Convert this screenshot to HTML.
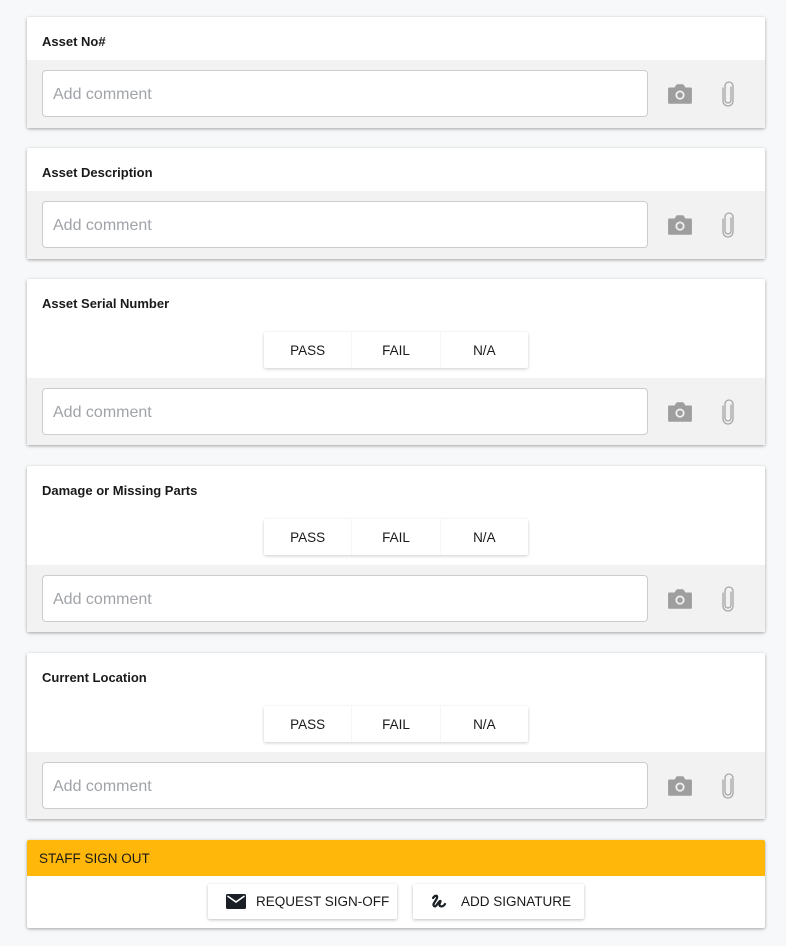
<!DOCTYPE html>
<html><head><meta charset="utf-8"><style>
*{box-sizing:border-box;margin:0;padding:0}
body{width:786px;height:946px;background:#f7f8f9;font-family:"Liberation Sans",sans-serif;position:relative;overflow:hidden}
.card{position:absolute;left:27px;width:738px;background:#fff;border-radius:2px;box-shadow:0 1px 3px rgba(0,0,0,.35)}
.t{position:absolute;left:15px;top:17px;font-size:13px;font-weight:bold;color:#1a1a1a}
.g{position:absolute;left:0;right:0;bottom:0;height:68px;background:#f2f2f2}
.in{position:absolute;left:15px;top:10px;width:606px;height:47px;background:#fff;border:1px solid #ccc;border-radius:4px;font-size:16px;color:#a0a3a8;padding:15px 10px 0}
.cam{position:absolute;left:640px;top:23px}
.clip{position:absolute;left:693px;top:21px}
.seg{position:absolute;left:237px;width:264px;height:36px;display:flex;box-shadow:0 1px 3px rgba(0,0,0,.2);border-radius:2px;background:#fff}
.seg div{flex:1;text-align:center;font-size:13.5px;line-height:37px;color:#1a1a1a;border-left:1px solid #f6f6f6}
.seg div:first-child{border-left:none}
.btn{position:absolute;top:44px;height:35px;background:#fff;box-shadow:0 1px 3px rgba(0,0,0,.25);border-radius:2px;font-size:13.5px;color:#1a1a1a;line-height:35px}
</style></head><body>

<div class="card" style="top:17px;height:111px"><div class="t">Asset No#</div><div class="g"><div class="in">Add comment</div>
<svg class="cam" width="26" height="22" viewBox="0 0 24 20"><path d="M2 4h5l2-3h6l2 3h5a1 1 0 0 1 1 1v13a1 1 0 0 1-1 1H2a1 1 0 0 1-1-1V5a1 1 0 0 1 1-1z" fill="#9e9e9e"/><circle cx="12" cy="11" r="4.2" fill="#f2f2f2"/><circle cx="12" cy="11" r="2.6" fill="#9e9e9e"/></svg>
<svg class="clip" width="16" height="26" viewBox="0 0 16 26"><path d="M11 6v13a3 3 0 0 1-6 0V5a4 4 0 0 1 8 0v15a5 5 0 0 1-10 0V7" fill="none" stroke="#a6a6a6" stroke-width="1.3" stroke-linecap="round"/></svg></div></div>

<div class="card" style="top:148px;height:111px"><div class="t">Asset Description</div><div class="g"><div class="in">Add comment</div>
<svg class="cam" width="26" height="22" viewBox="0 0 24 20"><path d="M2 4h5l2-3h6l2 3h5a1 1 0 0 1 1 1v13a1 1 0 0 1-1 1H2a1 1 0 0 1-1-1V5a1 1 0 0 1 1-1z" fill="#9e9e9e"/><circle cx="12" cy="11" r="4.2" fill="#f2f2f2"/><circle cx="12" cy="11" r="2.6" fill="#9e9e9e"/></svg>
<svg class="clip" width="16" height="26" viewBox="0 0 16 26"><path d="M11 6v13a3 3 0 0 1-6 0V5a4 4 0 0 1 8 0v15a5 5 0 0 1-10 0V7" fill="none" stroke="#a6a6a6" stroke-width="1.3" stroke-linecap="round"/></svg></div></div>

<div class="card" style="top:279px;height:166px"><div class="t">Asset Serial Number</div>
<div class="seg" style="top:53px"><div>PASS</div><div>FAIL</div><div>N/A</div></div>
<div class="g" style="height:67px"><div class="in">Add comment</div>
<svg class="cam" width="26" height="22" viewBox="0 0 24 20"><path d="M2 4h5l2-3h6l2 3h5a1 1 0 0 1 1 1v13a1 1 0 0 1-1 1H2a1 1 0 0 1-1-1V5a1 1 0 0 1 1-1z" fill="#9e9e9e"/><circle cx="12" cy="11" r="4.2" fill="#f2f2f2"/><circle cx="12" cy="11" r="2.6" fill="#9e9e9e"/></svg>
<svg class="clip" width="16" height="26" viewBox="0 0 16 26"><path d="M11 6v13a3 3 0 0 1-6 0V5a4 4 0 0 1 8 0v15a5 5 0 0 1-10 0V7" fill="none" stroke="#a6a6a6" stroke-width="1.3" stroke-linecap="round"/></svg></div></div>

<div class="card" style="top:466px;height:166px"><div class="t">Damage or Missing Parts</div>
<div class="seg" style="top:53px"><div>PASS</div><div>FAIL</div><div>N/A</div></div>
<div class="g" style="height:67px"><div class="in">Add comment</div>
<svg class="cam" width="26" height="22" viewBox="0 0 24 20"><path d="M2 4h5l2-3h6l2 3h5a1 1 0 0 1 1 1v13a1 1 0 0 1-1 1H2a1 1 0 0 1-1-1V5a1 1 0 0 1 1-1z" fill="#9e9e9e"/><circle cx="12" cy="11" r="4.2" fill="#f2f2f2"/><circle cx="12" cy="11" r="2.6" fill="#9e9e9e"/></svg>
<svg class="clip" width="16" height="26" viewBox="0 0 16 26"><path d="M11 6v13a3 3 0 0 1-6 0V5a4 4 0 0 1 8 0v15a5 5 0 0 1-10 0V7" fill="none" stroke="#a6a6a6" stroke-width="1.3" stroke-linecap="round"/></svg></div></div>

<div class="card" style="top:653px;height:166px"><div class="t">Current Location</div>
<div class="seg" style="top:53px"><div>PASS</div><div>FAIL</div><div>N/A</div></div>
<div class="g" style="height:67px"><div class="in">Add comment</div>
<svg class="cam" width="26" height="22" viewBox="0 0 24 20"><path d="M2 4h5l2-3h6l2 3h5a1 1 0 0 1 1 1v13a1 1 0 0 1-1 1H2a1 1 0 0 1-1-1V5a1 1 0 0 1 1-1z" fill="#9e9e9e"/><circle cx="12" cy="11" r="4.2" fill="#f2f2f2"/><circle cx="12" cy="11" r="2.6" fill="#9e9e9e"/></svg>
<svg class="clip" width="16" height="26" viewBox="0 0 16 26"><path d="M11 6v13a3 3 0 0 1-6 0V5a4 4 0 0 1 8 0v15a5 5 0 0 1-10 0V7" fill="none" stroke="#a6a6a6" stroke-width="1.3" stroke-linecap="round"/></svg></div></div>

<div class="card" style="top:840px;height:88px">
<div style="height:36px;background:#ffb80a;font-size:13.5px;color:#1a1a1a;line-height:37px;padding-left:12px;border-radius:2px 2px 0 0">STAFF SIGN OUT</div>
<div class="btn" style="left:181px;width:189px"><svg style="position:absolute;left:18px;top:10px" width="20" height="15" viewBox="0 0 20 15"><rect x="0" y="0" width="20" height="15" rx="1.5" fill="#1a1f26"/><path d="M1.5 2l8.5 6 8.5-6" fill="none" stroke="#fff" stroke-width="1.6"/></svg><span style="position:absolute;left:48px">REQUEST SIGN-OFF</span></div>
<div class="btn" style="left:386px;width:171px"><svg style="position:absolute;left:17px;top:8px" width="20" height="20" viewBox="0 0 20 20"><path d="M3 6c2-3 5-3 4 0s-5 6-3 8 4-4 6-5-2 4 0 5 4 0 5-2" fill="none" stroke="#1a1f26" stroke-width="2.2" stroke-linecap="round" stroke-linejoin="round"/></svg><span style="position:absolute;left:48px">ADD SIGNATURE</span></div>
</div>
</body></html>
